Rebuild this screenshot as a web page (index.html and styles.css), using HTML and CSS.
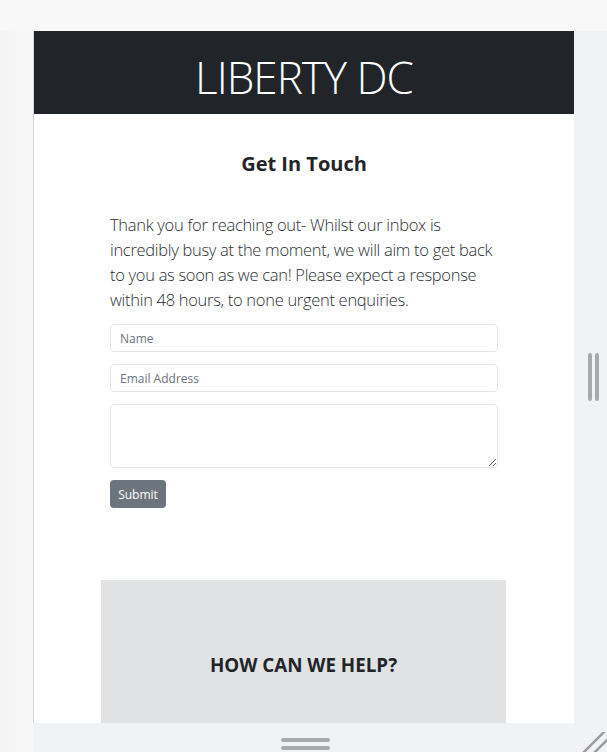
FILE: index.html
```html
<!DOCTYPE html>
<html lang="en">
<head>
<meta charset="utf-8">
<title>Liberty DC - Contact</title>
<link rel="stylesheet" href="styles.css">
</head>
<body>
<div class="viewport">
  <div class="top-strip"></div>
  <div class="middle">
    <div class="gutter"></div>
    <main class="card">
      <header class="brand"><h1>LIBERTY DC</h1></header>
      <section class="contact">
        <h2>Get In Touch</h2>
        <p class="lead">Thank you for reaching out- Whilst our inbox is incredibly busy at the moment, we will aim to get back to you as soon as we can! Please expect a response within 48 hours, to none urgent enquiries.</p>
        <form class="form">
          <input class="field" type="text" placeholder="Name">
          <input class="field" type="email" placeholder="Email Address">
          <textarea class="field area"></textarea>
          <button class="btn" type="button">Submit</button>
        </form>
      </section>
      <section class="help"><h3>HOW CAN WE HELP?</h3></section>
    </main>
    <aside class="side"><span class="grip-v"></span><span class="grip-v"></span></aside>
  </div>
  <div class="bottom">
    <div class="handle-zone"><div class="handle"><span></span><span></span></div></div>
    <svg class="resize" width="25" height="20" viewBox="0 0 25 20"><path d="M1 21 L25 -3 M12 21 L26 7" stroke="#9c9c9c" stroke-width="2.5" fill="none" stroke-linecap="round"/></svg>
  </div>
</div>
</body>
</html>
```
FILE: styles.css
```css
html, body { margin: 0; padding: 0; }
body {
  font-family: "Open Sans", "Noto Sans", "Liberation Sans", sans-serif;
  background: #f6f6f6;
  color: #212529;
}
.viewport {
  height: 752px;
  display: flex;
  flex-direction: column;
  overflow: hidden;
  background: linear-gradient(90deg, #f4f4f4 0, #f8f8f8 33px);
}
.top-strip { height: 31px; flex: none; background: #f8f8f8; }
.middle { flex: 1; display: flex; min-height: 0; }
.gutter { width: 33px; flex: none; }
.card {
  width: 540px;
  flex: none;
  background: #fff;
  border-left: 1px solid #d6d6d6;
  overflow: hidden;
}
.brand {
  background: #212529;
  height: 83px;
  display: flex;
  align-items: center;
  justify-content: center;
}
.brand h1 {
  margin: 0;
  color: #fff;
  font-weight: 300;
  font-size: 44px;
  line-height: 1;
  padding-top: 8px;
  letter-spacing: -1px;
}
.contact { padding: 38px 76px 0; }
.contact h2 {
  margin: 0;
  text-align: center;
  font-size: 20px;
  line-height: 24px;
  font-weight: 700;
}
.lead {
  margin: 36px 0 12px;
  font-size: 16.5px;
  line-height: 25px;
  font-weight: 300;
  letter-spacing: -0.3px;
  color: #2b2f33;
}
.form { display: flex; flex-direction: column; gap: 12px; align-items: flex-start; }
.field {
  box-sizing: border-box;
  width: 100%;
  height: 28px;
  margin: 0;
  padding: 0 9px;
  border: 1px solid #e2e4e7;
  border-radius: 4px;
  font-family: inherit;
  font-size: 12px;
  color: #495057;
  background: #fff;
}
.field::placeholder { color: #6c757d; }
.area { height: 64px; resize: vertical; }
.btn {
  width: 56px;
  height: 28px;
  border: 0;
  border-radius: 4px;
  background: #6c757d;
  color: #fff;
  font-family: inherit;
  font-size: 12px;
  padding: 0;
}
.help {
  margin: 72px 68px 0 67px;
  background: #e1e2e4;
  padding: 73px 0 80px;
}
.help h3 {
  margin: 0;
  text-align: center;
  font-size: 18.8px;
  line-height: 24px;
  font-weight: 700;
}
.side {
  flex: 1;
  background: #f1f2f4;
  display: flex;
  align-items: center;
  justify-content: center;
  gap: 3px;
  padding-left: 5px;
}
.grip-v { width: 4px; height: 48px; background: #a9a9a9; border-radius: 2px; }
.bottom {
  height: 29px;
  flex: none;
  margin-left: 33px;
  background: #f1f2f4;
  position: relative;
}
.handle-zone { width: 541px; display: flex; justify-content: center; padding-left: 4px; box-sizing: border-box; }
.handle { display: flex; flex-direction: column; gap: 4px; padding-top: 15px; }
.handle span { display: block; width: 49px; height: 4px; border-radius: 2px; background: #a9a9a9; }
.resize { position: absolute; right: 0; bottom: 0; }
```
